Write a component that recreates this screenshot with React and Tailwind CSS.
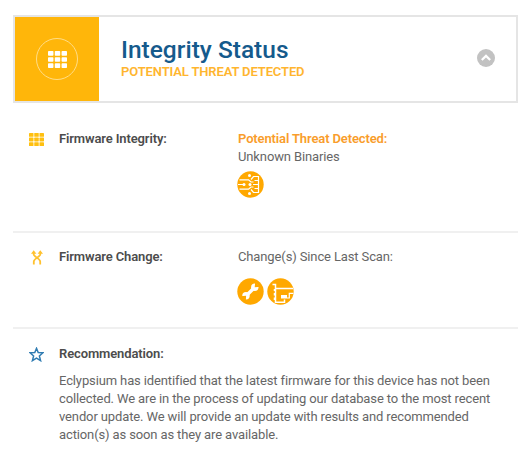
import React from "react";

function Grid({ className, gap = 1.4 }) {
  const w = (20 - 2 * gap) / 3;
  const h = (17 - 2 * gap) / 3;
  return (
    <svg viewBox="0 0 20 17" className={className} preserveAspectRatio="none" fill="currentColor">
      {[0, 1, 2].map((r) =>
        [0, 1, 2].map((c) => (
          <rect key={r + "-" + c} x={c * (w + gap)} y={r * (h + gap)} width={w} height={h} rx="0.8" />
        ))
      )}
    </svg>
  );
}

function ChangeIcon() {
  return (
    <svg viewBox="0 0 12 15" className="ml-[2px] h-[15px] w-3" fill="none" stroke="#ffc12e" strokeWidth="1.8">
      <path d="M2.7 2.5V4.3C2.7 6.8 9.2 8.6 9.2 11.5V14.5M9.3 2.5V4.3C9.3 6.8 2.8 8.6 2.8 11.5V14.5" />
      <path d="M0 3.8L2.7 0.2L5.4 3.8ZM6.6 3.8L9.3 0.2L12 3.8Z" fill="#ffc12e" stroke="none" />
    </svg>
  );
}

function CircuitIcon() {
  return (
    <svg viewBox="0 0 27 27" className="size-[27px]" fill="none" stroke="#fff" strokeWidth="1.2">
      <circle cx="13.5" cy="13.5" r="13.2" fill="#ffa800" stroke="none" />
      <path d="M2.5 8.8H11.5L14 11H16.5M14 8.5L16.5 5.5H21.5V9.5H17.5M21.5 9.5V17.5M16 13.5H21.5M1 13.5H6M2.5 18.2H11.5L14 16H16.5M14 18.5L16.5 21.5H21.5V17.5H17.5" />
      <g fill="#fff" stroke="none">
        <circle cx="12.5" cy="4.6" r="1.5" />
        <circle cx="7" cy="13.5" r="1.5" />
        <circle cx="13" cy="13.5" r="1.5" />
        <circle cx="12.5" cy="22.4" r="1.5" />
      </g>
    </svg>
  );
}

function WrenchIcon() {
  return (
    <svg viewBox="0 0 27 27" className="size-[27px]">
      <circle cx="13.5" cy="13.5" r="13.2" fill="#ffa800" />
      <path d="M9.5 17.5L17.5 9.5" stroke="#fff" strokeWidth="3.4" />
      <circle cx="17.8" cy="9.2" r="3.7" fill="#fff" />
      <circle cx="9" cy="17.8" r="3.7" fill="#fff" />
      <path d="M17.7 9.3L18.2 4L23.5 8.8ZM9.1 17.7L3.3 18.2L8.8 23.5Z" fill="#ffa800" />
    </svg>
  );
}

function CardIcon() {
  return (
    <svg viewBox="0 0 27 27" className="size-[27px]" fill="none">
      <circle cx="13.5" cy="13.5" r="13.2" fill="#ffa800" />
      <path d="M5.5 6.5H8.5V24.3H17.5V21.5M8.5 10.5H26" stroke="#fff" strokeWidth="1.5" />
      <path d="M20 20H22.3V15.3H26.3" stroke="#fff" strokeWidth="1.2" />
      <path d="M7.5 11V13M7.5 15V17.5M7.5 19.5V22" stroke="#fff" strokeWidth="1.5" />
      <path d="M14 17H20V20.5H14Z" fill="#fff" />
    </svg>
  );
}

function Row({ icon, title, children, className }) {
  return (
    <section className={"flex pl-4 " + className}>
      <div className="flex h-[18px] w-[30px] shrink-0 items-center">{icon}</div>
      <h2 className="w-[179px] shrink-0 font-semibold text-[#4c4c4c]">{title}</h2>
      <div>{children}</div>
    </section>
  );
}

export default function App() {
  return (
    <main className="h-[472px] w-[531px] overflow-hidden bg-white pr-[13px] pl-[13px] pt-[15px] font-['Roboto',sans-serif] text-[13px] leading-[18px] tracking-[-0.125px] text-[#666]">
      <header className="flex h-[88px] items-center border-2 border-[#e5e5e5]">
        <div className="flex h-full w-[84px] shrink-0 items-center justify-center bg-[#ffb60a]">
          <div className="flex size-[42px] items-center justify-center rounded-full border-[1.5px] border-[#ffdd87] text-white">
            <Grid className="h-[17px] w-[19px]" />
          </div>
        </div>
        <div className="mb-[3px] ml-[22px] grow">
          <h1 className="h-[28px] text-[24.5px] leading-[27px] font-medium tracking-[0px] whitespace-nowrap text-[#155a8c]">Integrity Status</h1>
          <p className="h-[16px] text-[13px] leading-[16px] font-semibold tracking-[-0.13px] whitespace-nowrap text-[#ffb52e]">POTENTIAL THREAT DETECTED</p>
        </div>
        <svg viewBox="0 0 18 18" className="mr-[21px] mb-[2px] size-[18px]" fill="none">
          <circle cx="9" cy="9" r="9" fill="#c2c2c2" />
          <path d="M4.8 11L9 6.9L13.2 11" stroke="#fff" strokeWidth="2.2" />
        </svg>
      </header>

      <Row className="h-[130px] border-b-2 border-[#f0f0f0] pt-[27px]" title="Firmware Integrity:" icon={<Grid className="mt-px h-[13px] w-[15px] text-[#ffc010]" gap={1} />}>
        <p className="font-semibold text-[#f99d2b]">Potential Threat Detected:</p>
        <p>Unknown Binaries</p>
        <div className="mt-[5px] -ml-px"><CircuitIcon /></div>
      </Row>

      <Row className="h-[96px] border-b-2 border-[#f0f0f0] pt-[15px]" title="Firmware Change:" icon={<ChangeIcon />}>
        <p>Change(s) Since Last Scan:</p>
        <div className="mt-[12px] -ml-px flex gap-[3px]"><WrenchIcon /><CardIcon /></div>
      </Row>

      <section className="flex pt-[16px] pl-4">
        <div className="flex h-[18px] w-[30px] shrink-0 items-center">
          <svg viewBox="0 0 14 14" className="size-[15px]" fill="none" stroke="#307cb2" strokeWidth="1.4">
            <path d="M7 1.3L8.6 5.2L13 5.4L9.7 8.3L10.8 12.7L7 10.3L3.2 12.7L4.3 8.3L1 5.4L5.4 5.2Z" />
          </svg>
        </div>
        <div>
          <h2 className="font-semibold text-[#4c4c4c]">Recommendation:</h2>
          <p className="mt-[9px] whitespace-nowrap">
            Eclypsium has identified that the latest firmware for this device has not been<br />
            collected. We are in the process of updating our database to the most recent<br />
            vendor update. We will provide an update with results and recommended<br />
            action(s) as soon as they are available.
          </p>
        </div>
      </section>
    </main>
  );
}
